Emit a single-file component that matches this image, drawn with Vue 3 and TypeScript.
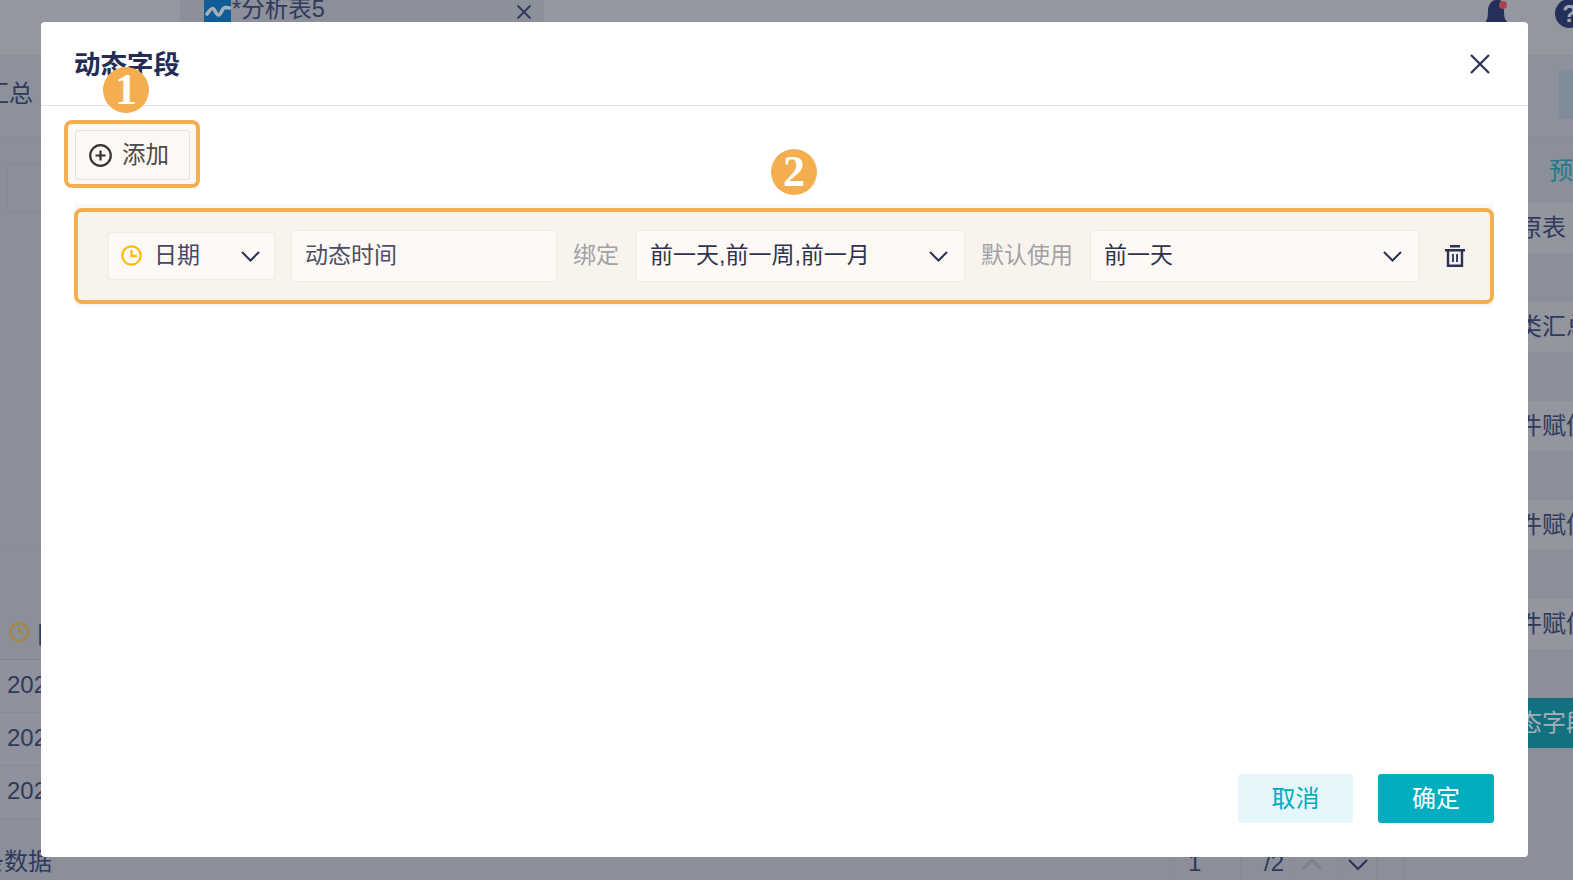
<script setup lang="ts">
const tableRows: string[] = ['2023-01-01', '2023-01-02', '2023-01-03']
const sideRows: string[] = ['原表', '类汇总', '件赋值', '件赋值', '件赋值']
</script>

<template>
  <div class="page">
    <header class="topbar">
      <div class="tab">
        <span class="tab-icon">
          <svg width="27" height="22" viewBox="0 0 27 22"><path d="M3 14 C5 11 7 8 9 8.5 C11 9 12 15 14.5 15 C17 15 18 8 21 7.5 C23 7.2 24 8 26 8" fill="none" stroke="#a6aeb7" stroke-width="3.6" stroke-linecap="round" /></svg>
        </span>
        <span class="tab-title">*分析表5</span>
        <svg class="tab-close" width="16" height="16" viewBox="0 0 16 16"><path d="M1.5 1.5 L14.5 14.5 M14.5 1.5 L1.5 14.5" stroke="#2f3a5c" stroke-width="2" /></svg>
      </div>
      <svg class="bell" width="26" height="24" viewBox="0 0 26 24">
        <path d="M1 23 C3 20 4 17 4 11 C4 5 7 1 11 0 L16 0 C19 2 20 6 20 11 C20 17 21 20 24 23 Z" fill="#25305a" />
        <circle cx="19" cy="5" r="4" fill="#a8444f" />
      </svg>
      <span class="help">?</span>
    </header>

    <div class="toolbar">
      <span class="clip-left toolbar-text">分类汇总</span>
      <span class="toolbar-box"></span>
    </div>

    <main class="main">
      <section class="left">
        <div class="filter-box"></div>
        <div class="spacer"></div>
        <div class="table-head">
          <svg width="20" height="20" viewBox="0 0 20 20"><circle cx="10" cy="10" r="8.8" fill="none" stroke="#a8863a" stroke-width="2.2" /><path d="M10 5 V10.5 H15" fill="none" stroke="#a8863a" stroke-width="2.2" /></svg>
          <span>日期</span>
        </div>
        <div v-for="row in tableRows" :key="row" class="table-row">{{ row }}</div>
        <footer class="table-foot">
          <span class="clip-left count">3条数据</span>
          <div class="pager">
            <span class="cell cell-page">1</span>
            <span class="cell cell-total">/2</span>
            <span class="cell cell-up"><svg width="20" height="12" viewBox="0 0 20 12"><path d="M1 11 L10 2 L19 11" fill="none" stroke="#7b8089" stroke-width="2" /></svg></span>
            <span class="cell cell-down"><svg width="20" height="12" viewBox="0 0 20 12"><path d="M1 1 L10 10 L19 1" fill="none" stroke="#2a3155" stroke-width="2" /></svg></span>
            <span class="cell cell-end"></span>
          </div>
        </footer>
      </section>

      <aside class="right">
        <div class="preview"><span>预览</span></div>
        <template v-for="(row, i) in sideRows" :key="i">
          <div class="side-row">{{ row }}</div>
          <div class="side-gap"></div>
        </template>
        <div class="dynamic-btn">态字段</div>
      </aside>
    </main>

    <div class="dialog">
      <div class="dialog-head">
        <h2 class="dialog-title">动态字段</h2>
        <svg class="dialog-close" width="20" height="20" viewBox="0 0 20 20"><path d="M1 1 L19 19 M19 1 L1 19" stroke="#2a3155" stroke-width="2.2" /></svg>
      </div>

      <div class="add-mark">
        <button class="add-btn" type="button">
          <svg width="23" height="23" viewBox="0 0 23 23"><circle cx="11.5" cy="11.5" r="10.3" fill="none" stroke="#38332e" stroke-width="2.2" /><path d="M11.5 6.5 V16.5 M6.5 11.5 H16.5" stroke="#38332e" stroke-width="2.2" /></svg>
          <span class="add-text">添加</span>
        </button>
      </div>

      <div class="field-strip">
        <div class="field-row">
          <div class="select select-type">
            <svg class="clock" width="21" height="21" viewBox="0 0 21 21"><circle cx="10.5" cy="10.5" r="9.2" fill="none" stroke="#fbbb10" stroke-width="2.3" /><path d="M10.5 5 V11 H16" fill="none" stroke="#fbbb10" stroke-width="2.3" /></svg>
            <span class="value">日期</span>
            <svg class="chev" width="19" height="11" viewBox="0 0 19 11"><path d="M1 1 L9.5 9.5 L18 1" fill="none" stroke="#2a3155" stroke-width="2" /></svg>
          </div>
          <div class="input-name">动态时间</div>
          <span class="label label-bind">绑定</span>
          <div class="select select-bind">
            <span class="value">前一天,前一周,前一月</span>
            <svg class="chev" width="19" height="11" viewBox="0 0 19 11"><path d="M1 1 L9.5 9.5 L18 1" fill="none" stroke="#2a3155" stroke-width="2" /></svg>
          </div>
          <span class="label label-default">默认使用</span>
          <div class="select select-default">
            <span class="value">前一天</span>
            <svg class="chev" width="19" height="11" viewBox="0 0 19 11"><path d="M1 1 L9.5 9.5 L18 1" fill="none" stroke="#2a3155" stroke-width="2" /></svg>
          </div>
          <svg class="trash" width="20" height="22" viewBox="0 0 20 22">
            <path d="M5 1.2 H15 M0 5.2 H20" stroke="#2a3155" stroke-width="2.4" />
            <path d="M3 5 V20.8 H17 V5" fill="none" stroke="#2a3155" stroke-width="2.4" />
            <path d="M8 9 V17 M12 9 V17" stroke="#2a3155" stroke-width="1.8" />
          </svg>
        </div>
      </div>

      <div class="dialog-foot">
        <button class="btn btn-cancel" type="button">取消</button>
        <button class="btn btn-ok" type="button">确定</button>
      </div>

      <span class="badge badge-one">1</span>
      <span class="badge badge-two">2</span>
    </div>
  </div>
</template>

<style scoped>
.page {
  position: relative;
  display: flex;
  flex-direction: column;
  width: 1573px;
  height: 880px;
  overflow: hidden;
  background: #8a8f99;
  color: #2f3a5c;
  font-family: "Liberation Sans", "Noto Sans CJK SC", sans-serif;
  font-size: 24px;
}
.topbar {
  display: flex;
  flex: none;
  height: 55px;
  background: #94979f;
}
.tab {
  display: flex;
  flex: none;
  width: 364px;
  height: 55px;
  margin-left: 180px;
  padding-left: 24px;
  box-sizing: border-box;
  background: #8b909a;
}
.tab-icon {
  flex: none;
  width: 27px;
  height: 22px;
  background: #105c97;
}
.tab-title {
  width: 94px;
  height: 18px;
  margin-left: 1px;
  font-size: 23.5px;
  line-height: 18px;
  white-space: nowrap;
}
.tab-close {
  margin: 4px 0 0 190px;
}
.bell {
  margin-left: 940px;
  flex: none;
}
.help {
  flex: none;
  width: 29px;
  height: 29px;
  margin: -1px 0 0 45px;
  border-radius: 50%;
  background: #25305a;
  color: #a3a8b0;
  font-weight: bold;
  font-size: 24px;
  line-height: 29px;
  text-align: center;
}
.toolbar {
  display: flex;
  flex: none;
  justify-content: space-between;
  align-items: center;
  height: 82px;
  background: #8c919b;
  box-sizing: border-box;
  border-bottom: 1px solid #878c96;
}
.clip-left {
  display: flex;
  justify-content: flex-end;
  white-space: nowrap;
}
.toolbar-text {
  width: 33px;
  padding-bottom: 8px;
}
.toolbar-box {
  width: 14px;
  height: 49px;
  margin-top: -2px;
  border-radius: 4px 0 0 4px;
  background: #7f8d98;
}
.main {
  display: flex;
  flex: 1;
  min-height: 0;
}
.left {
  display: flex;
  flex-direction: column;
  flex: none;
  width: 1500px;
}
.filter-box {
  flex: none;
  width: 200px;
  height: 49px;
  margin: 26px 0 0 7px;
  box-sizing: border-box;
  border: 1px solid #858993;
  background: #8c8f99;
}
.spacer {
  flex: none;
  height: 338px;
  border-bottom: 1px solid #858a94;
}
.table-head {
  display: flex;
  flex: none;
  align-items: center;
  gap: 6px;
  height: 109px;
  padding: 54px 0 0 9px;
  box-sizing: border-box;
  border-bottom: 1px solid #7f848e;
}
.table-row {
  flex: none;
  height: 53px;
  padding-left: 7px;
  box-sizing: border-box;
  border-bottom: 1px solid #858a94;
  background: #8f929c;
  line-height: 50px;
}
.table-foot {
  display: flex;
  flex: 1;
  justify-content: space-between;
  padding-right: 96px;
}
.count {
  width: 52px;
  padding-top: 31px;
  line-height: 24px;
}
.pager {
  display: flex;
}
.cell {
  display: block;
  box-sizing: border-box;
  padding-top: 32px;
  line-height: 24px;
  border-left: 1px solid #858a94;
}
.cell svg {
  display: block;
}
.cell-page {
  width: 67px;
  padding-left: 14px;
}
.cell-total {
  width: 53px;
  padding-left: 23px;
}
.cell-up {
  width: 37px;
  padding: 39px 0 0 8px;
}
.cell-down {
  width: 38px;
  margin-left: 8px;
  padding: 40px 0 0 9px;
}
.cell-end {
  width: 28px;
  border-right: 1px solid #858a94;
}
.right {
  display: flex;
  flex-direction: column;
  flex: none;
  width: 73px;
}
.preview {
  display: flex;
  flex: none;
  align-items: center;
  height: 66px;
  padding: 0 0 4px 49px;
  box-sizing: border-box;
  color: #1f7a90;
  white-space: nowrap;
}
.side-row {
  flex: none;
  height: 50px;
  padding-left: 18px;
  background: #93959f;
  line-height: 49px;
  white-space: nowrap;
}
.side-gap {
  flex: none;
  height: 49px;
}
.dynamic-btn {
  flex: none;
  height: 50px;
  padding-left: 18px;
  background: #127080;
  color: #a6adb5;
  line-height: 50px;
  white-space: nowrap;
}

.dialog {
  position: absolute;
  left: 41px;
  top: 22px;
  display: flex;
  flex-direction: column;
  width: 1487px;
  height: 835px;
  border-radius: 4px;
  background: #fff;
}
.dialog-head {
  display: flex;
  flex: none;
  justify-content: space-between;
  align-items: center;
  height: 84px;
  padding: 0 38px 2px 33px;
  box-sizing: border-box;
  border-bottom: 1px solid #e3e3e3;
}
.dialog-close {
  margin-top: 2px;
}
.dialog-title {
  margin: 0;
  color: #252d55;
  font-size: 26.5px;
  font-weight: bold;
}
.add-mark {
  flex: none;
  align-self: flex-start;
  margin: 14px 0 0 23px;
  padding: 6px 6px 4px 7px;
  border: 4px solid #f5ae4f;
  border-radius: 8px;
  background: #fdf8f3;
}
.add-btn {
  display: flex;
  align-items: center;
  gap: 10px;
  width: 115px;
  height: 50px;
  padding: 0 0 0 13px;
  box-sizing: border-box;
  border: 1px solid #e5e0da;
  border-radius: 3px;
  background: #fdf8f3;
  color: #4e4a47;
  font-family: inherit;
  font-size: 23.5px;
}
.add-text {
  padding-bottom: 4px;
}
.field-strip {
  flex: none;
  margin: 16px 34px 0 33px;
  padding: 4px 0 3px;
  background: #f9f9f9;
}
.field-row {
  display: flex;
  align-items: center;
  height: 96px;
  padding-left: 30px;
  box-sizing: border-box;
  border: 4px solid #f5ae4f;
  border-radius: 8px;
  background: #f8f4ed;
  font-size: 23px;
}
.select {
  display: flex;
  flex: none;
  align-items: center;
  height: 52px;
  padding: 0 16px 0 13px;
  box-sizing: border-box;
  border: 1px solid #f0ebe5;
  border-radius: 2px;
  background: #fef9f4;
  color: #2e3350;
}
.value {
  flex: 1;
  padding-bottom: 6px;
  white-space: nowrap;
}
.select-type {
  width: 167px;
  height: 48px;
  padding: 0 14px 0 12px;
  color: #3f4a6a;
}
.clock {
  flex: none;
  margin: -2px 12px 0 0;
}
.input-name {
  flex: none;
  width: 266px;
  height: 52px;
  margin-left: 16px;
  padding-left: 13px;
  box-sizing: border-box;
  border: 1px solid #f0ebe5;
  background: #fef9f4;
  color: #4a4f68;
  line-height: 49px;
}
.label {
  flex: none;
  margin: 0 16px;
  padding-bottom: 6px;
  color: #a1a1a5;
  white-space: nowrap;
}
.label-bind {
  width: 47px;
}
.label-default {
  width: 93px;
}
.select-bind {
  width: 329px;
}
.select-default {
  width: 329px;
}
.trash {
  flex: none;
  margin-left: 26px;
}
.dialog-foot {
  display: flex;
  justify-content: flex-end;
  gap: 25px;
  margin-top: auto;
  padding: 0 34px 34px 0;
}
.btn {
  width: 115px;
  height: 49px;
  padding: 0 0 4px;
  border: 0;
  border-radius: 3px;
  font-family: inherit;
  font-size: 24px;
}
.btn-cancel {
  background: #e5f7fa;
  color: #02adbf;
}
.btn-ok {
  width: 116px;
  background: #02adbf;
  color: #fff;
}
.badge {
  position: absolute;
  width: 46px;
  height: 46px;
  border-radius: 50%;
  background: #f5ae4f;
  color: #fff;
  font-family: "Liberation Serif", serif;
  font-weight: bold;
  font-size: 44px;
  line-height: 46px;
  text-align: center;
}
.badge-one {
  left: 62px;
  top: 45px;
}
.badge-two {
  left: 730px;
  top: 127px;
}
</style>

<style>
html,
body {
  margin: 0;
  background: #8a8f99;
}
</style>
